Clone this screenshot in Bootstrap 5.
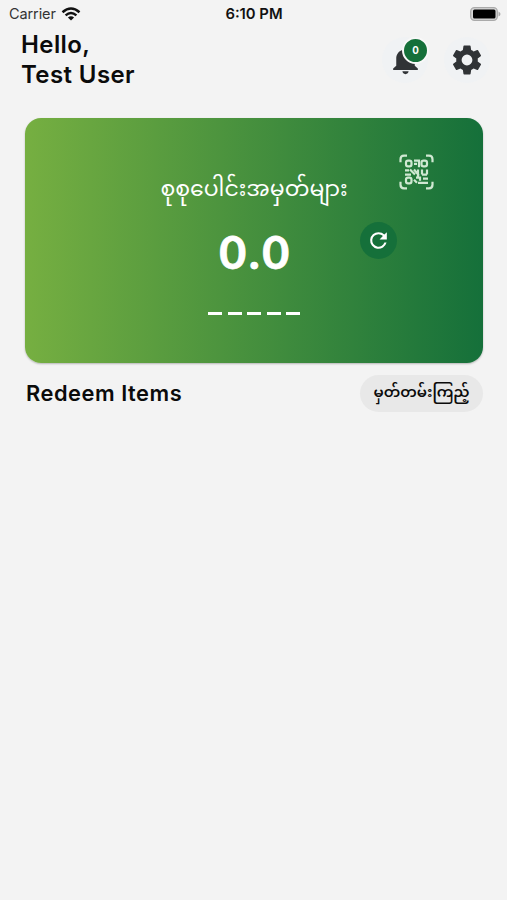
<!DOCTYPE html>
<html lang="my">
<head>
<meta charset="utf-8">
<meta name="viewport" content="width=device-width, initial-scale=1">
<title>Points</title>
<link href="https://cdn.jsdelivr.net/npm/bootstrap@5.3.0/dist/css/bootstrap.min.css" rel="stylesheet">
<style>
body{background:#f3f3f3;color:#0b0b0b;font-family:Inter,"Noto Sans Myanmar","Noto Sans",sans-serif;min-height:900px}
svg{display:block}
.status-bar{height:27px;padding:0 6px 0 9px;font-size:14.5px;line-height:27px}
.status-bar>*{flex:1 1 0}
.carrier{color:#333;letter-spacing:-.1px}
.carrier svg{margin-left:5px}
.clock{font-weight:600;color:#111;font-size:14.8px;padding:1px 2px 0 0}
.top-row{height:91px;padding:3px 17px 0 21px}
.greeting{font-size:24px;line-height:29.5px;font-weight:600;letter-spacing:.4px}
.tools{padding-top:7px}
.tool{width:46px;height:46px;border-radius:50%;background:#f0f2f4}
.count{width:27px;height:27px;left:20px;top:0;border:2px solid #f8f8f8;background:#15703a;font-family:Lato,sans-serif;font-size:10.5px;font-weight:900}
.points{height:245px;margin:0 24px 0 25px;border-radius:16px;background:linear-gradient(to right,#76af41,#15703a);box-shadow:0 1px 2px rgba(0,0,0,.25)}
.points-grid{display:grid;grid-template-columns:124px 1fr 124px;height:100%;padding-top:36px;grid-template-rows:66px 66px 1fr}
.label-text{font-size:22px;line-height:69px;white-space:nowrap}
.amount{font-family:Lato,sans-serif;font-weight:700;font-size:46.5px;line-height:62px;letter-spacing:2.5px;padding-left:3px;-webkit-text-stroke:.8px #fff}
.scan{padding-left:40px}
.refresh{width:37px;height:37px;background:#15703a;margin:2px 0 0 1px}
.dashes{padding-top:26px;gap:5.5px}
.dash{width:14px;height:3px;background:#fff}
.section-row{height:61px;padding:0 24px 0 26px}
.section-title{font-size:21.8px;font-weight:600;letter-spacing:.55px}
.history{height:37px;width:123px;background:#e8e8e8;font-size:14.8px;line-height:33px;font-weight:600;white-space:nowrap;padding-bottom:2px}
</style>
<script src="https://cdn.jsdelivr.net/npm/bootstrap@5.3.0/dist/js/bootstrap.bundle.min.js"></script>
</head>
<body>
<header class="status-bar d-flex align-items-center">
  <div class="carrier d-flex align-items-center"><span>Carrier</span>
    <svg width="20" height="14" viewBox="0 0 20 14" fill="none" stroke="#111" stroke-width="2.500"><path d="M1.500 5.200Q10-2.200 18.500 5.200M4.600 8.400Q10 3.700 15.400 8.400"/><path d="M10 13.500L6.900 10.400Q10 8 13.100 10.400Z" fill="#111" stroke="none"/></svg>
  </div>
  <div class="clock text-center">6:10 PM</div>
  <div class="d-flex justify-content-end"><svg width="31" height="14" viewBox="0 0 31 14"><rect x=".7" y=".7" width="26.600" height="12.600" rx="3.800" fill="#d8d8d8" stroke="#aaa" stroke-width="1.300"/><rect x="3" y="2.500" width="22.500" height="9" rx="1.500" fill="#000"/><path d="M28.500 4.500Q30.500 5.500 30.500 7T28.500 9.500Z" fill="#aaa"/></svg></div>
</header>
<main>
  <div class="top-row d-flex justify-content-between align-items-start">
    <div class="greeting">Hello,<br>Test User</div>
    <div class="tools d-flex gap-3">
      <div class="tool position-relative d-flex align-items-center justify-content-center">
        <svg width="37" height="34" viewBox="0 0 24 24" preserveAspectRatio="none" fill="#303336"><path d="M12 22c1.100 0 2-.9 2-2h-4c0 1.100.9 2 2 2zm6-6v-5c0-3.070-1.640-5.640-4.500-6.320V4a1.500 1.500 0 0 0-3 0v.68C7.630 5.360 6 7.920 6 11v5l-2 2v1h16v-1l-2-2z"/></svg>
        <span class="count position-absolute rounded-circle text-white d-flex align-items-center justify-content-center">0</span>
      </div>
      <div class="tool d-flex align-items-center justify-content-center">
        <svg width="36" height="36" viewBox="0 0 24 24" fill="#303336"><path d="M19.140 12.940c.04-.3.06-.61.06-.94s-.02-.64-.07-.94l2.030-1.580a.49.49 0 0 0 .12-.61l-1.920-3.320a.49.49 0 0 0-.59-.22l-2.390.96a7 7 0 0 0-1.620-.94l-.36-2.540a.48.48 0 0 0-.48-.41h-3.840a.48.48 0 0 0-.47.41l-.36 2.540a7.300 7.300 0 0 0-1.620.94l-2.390-.96a.48.48 0 0 0-.59.22L2.740 8.870a.48.48 0 0 0 .12.610l2.030 1.580a6 6 0 0 0 0 1.880l-2.030 1.580a.49.49 0 0 0-.12.610l1.920 3.320c.12.22.37.29.59.22l2.390-.96c.5.380 1.030.7 1.620.94l.36 2.540c.05.24.24.41.48.41h3.840c.24 0 .44-.17.47-.41l.36-2.540a7 7 0 0 0 1.620-.94l2.390.96c.22.08.47 0 .59-.22l1.920-3.320a.48.48 0 0 0-.12-.610zM12 15.600a3.600 3.600 0 1 1 0-7.200 3.600 3.600 0 0 1 0 7.200z"/></svg>
      </div>
    </div>
  </div>
  <section class="points text-white">
    <div class="points-grid text-center">
      <span></span>
      <div class="label-text">စုစုပေါင်းအမှတ်များ</div>
      <div class="scan d-flex">
        <svg width="35" height="36" viewBox="0 0 35 35" preserveAspectRatio="none" fill="none" stroke="#cfe8d2" stroke-width="2.200"><path d="M1.500 8V5Q1.500 1.500 5 1.500H8M27 1.500H30Q33.500 1.500 33.500 5V8M33.500 27V30Q33.500 33.500 30 33.500H27M8 33.500H5Q1.500 33.500 1.500 30V27"/><rect x="7" y="6.500" width="5.500" height="5.500" rx="2"/><rect x="22.500" y="6.500" width="5.500" height="5.500" rx="2"/><rect x="7" y="23" width="5.500" height="5.500" rx="2"/><path d="M15 6.500H20V13M15 9.500H18M6 16H10M11 15L16 20M12 20H6M15 15L20 21M19 15V22M23 15V20M28 15V20M23 20H28M17 23H21V26M15 25L18 28M19 28H29M24 24H29"/></svg>
      </div>
      <span></span>
      <div class="amount">0.0</div>
      <div><div class="refresh rounded-circle d-flex align-items-center justify-content-center"><svg width="25" height="25" viewBox="0 0 24 24" fill="#fff"><path d="M17.650 6.350A7.960 7.960 0 0 0 12 4a8 8 0 1 0 7.730 10h-2.080A6 6 0 1 1 12 6c1.660 0 3.140.69 4.220 1.780L13 11h7V4l-2.350 2.350z"/></svg></div></div>
      <span></span>
      <div class="dashes d-flex justify-content-center"><i class="dash"></i><i class="dash"></i><i class="dash"></i><i class="dash"></i><i class="dash"></i></div>
    </div>
  </section>
  <div class="section-row d-flex align-items-center justify-content-between">
    <div class="section-title">Redeem Items</div>
    <div class="history rounded-pill d-flex align-items-center justify-content-center">မှတ်တမ်းကြည့်</div>
  </div>
</main>
</body>
</html>
